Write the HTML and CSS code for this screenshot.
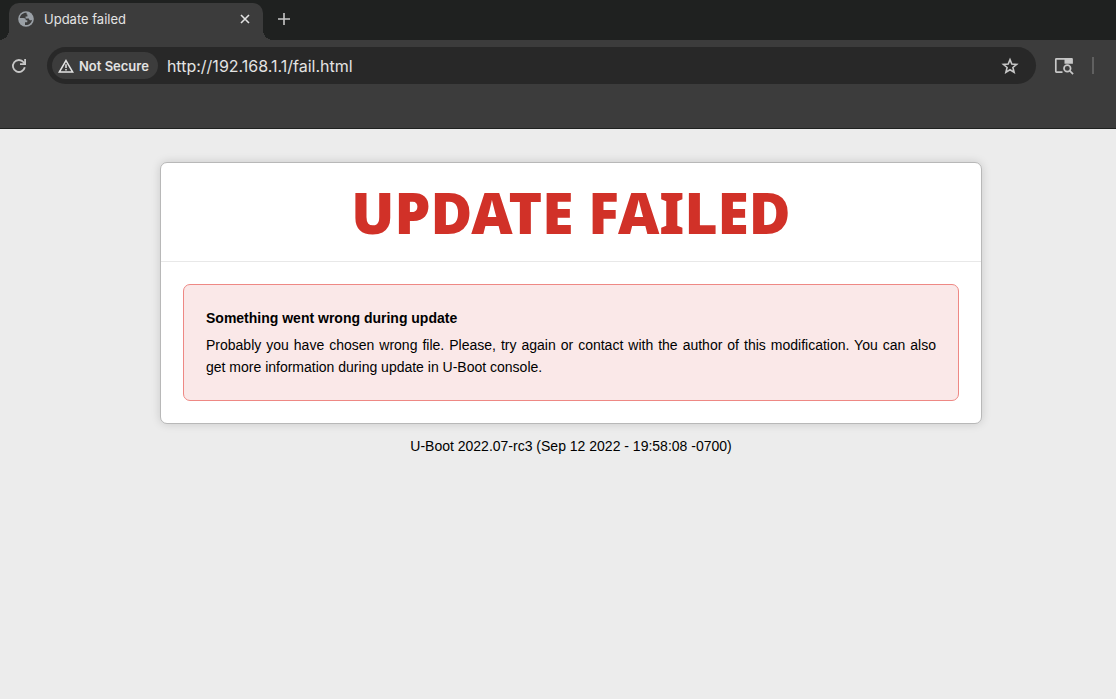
FILE: index.html
```html
<!DOCTYPE html>
<html lang="en">
<head>
  <meta charset="UTF-8">
  <title>Update failed</title>
  <link rel="stylesheet" href="styles.css">
</head>
<body>

  <header class="browser">
    <div class="tabs">
      <div class="tab">
        <svg class="globe" width="16" height="16" viewBox="0 0 16 16" aria-hidden="true">
          <circle cx="8" cy="8" r="7.8" fill="#9aa0a6"/>
          <path d="M8.6 1.8C5 1.6 2.3 4 1.8 7.1h3.4c1.8 0 2.6.8 2.6 2.1h1.5v2H7v2.8c3.5.6 6.7-1.8 7.1-5.2-.8.6-1.7.7-2.5.2-.5-.3-.7-.8-.7-1.4H7.6V5.4h1.8V3.6H8.6z" fill="#3c3c3c"/>
        </svg>
        <span class="tab-title">Update failed</span>
        <button class="icon-btn" aria-label="Close tab">
          <svg width="10" height="10" viewBox="0 0 10 10"><path d="M1 1l8 8M9 1L1 9" stroke="#e3e3e3" stroke-width="1.6"/></svg>
        </button>
      </div>
      <button class="icon-btn new-tab" aria-label="New tab">
        <svg width="12" height="12" viewBox="0 0 12 12"><path d="M6 0v12M0 6h12" stroke="#c7c7c7" stroke-width="1.6"/></svg>
      </button>
    </div>

    <div class="toolbar">
      <button class="icon-btn" aria-label="Reload">
        <svg width="16" height="16" viewBox="0 0 16 16" fill="none" stroke="#c7c7c7" stroke-width="1.8"><path d="M13.8 9.3A6 6 0 1 1 12.6 4.2L14 5.8"/><path d="M14.1 1v5.2H9"/></svg>
      </button>
      <div class="address">
        <button class="chip">
          <svg width="16" height="14" viewBox="0 0 16 14"><path d="M8 1.6L14.7 13H1.3z" fill="none" stroke="#e3e3e3" stroke-width="1.5"/><path d="M8 5.2v3.9M8 10v1.5" stroke="#e3e3e3" stroke-width="1.5"/></svg>
          Not Secure
        </button>
        <input class="url" type="text" value="http://192.168.1.1/fail.html" aria-label="Address">
        <button class="icon-btn" aria-label="Bookmark this page">
          <svg width="18" height="18" viewBox="0 0 18 18"><path d="M9 2.6l1.8 4.4 4.8.4-3.7 3.1 1.2 4.7L9 12.7l-4.1 2.5 1.2-4.7-3.7-3.1 4.8-.4z" fill="none" stroke="#c7c7c7" stroke-width="1.6"/></svg>
        </button>
      </div>
      <button class="icon-btn" aria-label="Search tabs">
        <svg width="20" height="18" viewBox="0 0 20 18" fill="none" stroke="#c7c7c7" stroke-width="1.7"><path d="M8.5 15.2H2.4a.6.6 0 0 1-.6-.6V2.5a.6.6 0 0 1 .6-.6H18"/><path d="M10.5 1h7.4a1 1 0 0 1 1 1v4.8h-8.4z" fill="#c7c7c7" stroke="none"/><circle cx="13.3" cy="11.4" r="3.3"/><path d="M15.6 13.7l3.5 3.5"/></svg>
      </button>
      <span class="divider"></span>
    </div>
  </header>

  <main class="page">
    <section class="card">
      <h1>UPDATE FAILED</h1>
      <div class="content">
        <div class="alert">
          <strong>Something went wrong during update</strong>
          <p>Probably you have chosen wrong file. Please, try again or contact with the author of this modification. You can also get more information during update in U-Boot console.</p>
        </div>
      </div>
    </section>
    <footer>U-Boot 2022.07-rc3 (Sep 12 2022 - 19:58:08 -0700)</footer>
  </main>

</body>
</html>
```

FILE: styles.css
```css
* { box-sizing: border-box; }
body {
  margin: 0;
  background: #ececec;
  color: #000;
  font-family: "Liberation Sans", Arial, sans-serif;
  font-size: 14px;
  line-height: 22px;
}
button, input { font: inherit; color: inherit; }

/* browser bar */
.browser {
  background: #3c3c3c;
  border-bottom: 1px solid #1f2120;
  color: #e3e3e3;
  font-family: Inter, Roboto, sans-serif;
}
.tabs {
  display: flex;
  align-items: center;
  height: 40px;
  padding: 3px 9px 0;
  background: #1f2120;
}
.tab {
  position: relative;
  display: flex;
  align-items: center;
  gap: 10px;
  width: 254px;
  height: 37px;
  padding: 0 9px 6px;
  background: #3c3c3c;
  border-radius: 10px 10px 0 0;
}
.tab::before, .tab::after {
  content: "";
  position: absolute;
  bottom: 0;
  width: 10px;
  height: 10px;
}
.tab::before {
  right: 100%;
  background: radial-gradient(circle at 0 0, #1f2120 10px, #3c3c3c 10px);
}
.tab::after {
  left: 100%;
  background: radial-gradient(circle at 100% 0, #1f2120 10px, #3c3c3c 10px);
}
.tab-title { flex: 1; font-size: 13px; }
.icon-btn {
  display: flex;
  align-items: center;
  justify-content: center;
  width: 18px;
  height: 18px;
  padding: 0;
  border: 0;
  background: none;
}
.icon-btn svg { flex: none; }
.new-tab { margin: 0 0 6px 12px; }
.toolbar {
  display: flex;
  align-items: center;
  gap: 19px;
  padding: 7px 22px 44px 10px;
}
.address {
  flex: 1;
  display: flex;
  align-items: center;
  gap: 9px;
  height: 37px;
  padding: 0 17px 0 5px;
  background: #282828;
  border-radius: 19px;
}
.chip {
  display: flex;
  align-items: center;
  gap: 5px;
  height: 27px;
  padding: 0 9px 0 6px;
  border: 0;
  border-radius: 14px;
  background: #3c3c3c;
  font-size: 13px;
  font-weight: 600;
}
.url {
  flex: 1;
  min-width: 0;
  padding: 0;
  border: 0;
  outline: 0;
  background: none;
  font-size: 16px;
}
.divider { width: 2px; height: 17px; background: #606060; }

/* page */
.page { padding: 33px 0 0 26px; }
.card {
  max-width: 822px;
  margin: 0 auto;
  background: #fff;
  border: 1px solid #b8b8b8;
  border-radius: 7px;
  box-shadow: 0 0 10px rgba(0, 0, 0, 0.15);
}
h1 {
  margin: 0;
  padding: 20px;
  border-bottom: 1px solid #e8e8e8;
  color: #d13128;
  font-family: Verdana, "Noto Sans", "DejaVu Sans", sans-serif;
  font-size: 57px;
  font-weight: 900;
  line-height: 58px;
  text-align: center;
}
.content { padding: 22px; }
.alert {
  padding: 22px;
  background: #fae8e8;
  border: 1px solid #ee8884;
  border-radius: 7px;
}
.alert p { margin: 5px 0 0; text-align: justify; }
footer { margin-top: 11px; text-align: center; }
```
